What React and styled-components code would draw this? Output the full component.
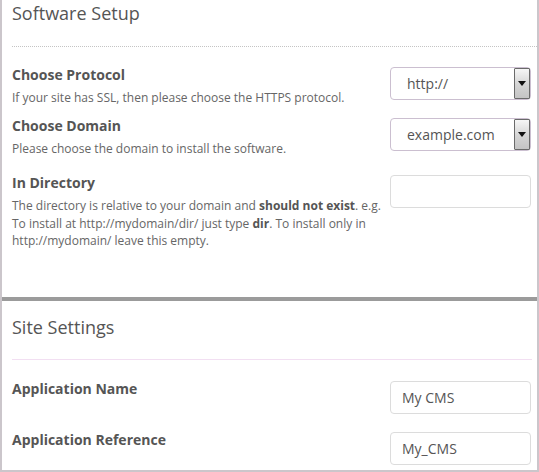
import React from 'react';
import styled, { createGlobalStyle } from 'styled-components';

const Global = createGlobalStyle`
  html, body { margin: 0; padding: 0; background: #fff; }
  body { font-family: "Open Sans", "Liberation Sans", sans-serif; }
  * { box-sizing: border-box; }
`;

const Frame = styled.div`
  width: 539px;
  height: 472px;
  border: 2px solid #cbc6cb;
  border-top: none;
  overflow: hidden;
  background: #fff;
`;

const Section = styled.section`
  padding-left: 10px;
  height: ${p => p.$height}px;
  border-bottom: ${p => (p.$divider ? '4px solid #9b9b9b' : 'none')};
`;

const Heading = styled.h2`
  margin: ${p => p.$top}px 0 0 0;
  font-size: 18px;
  line-height: 24px;
  font-weight: 400;
  color: #555;
`;

const Rule = styled.div`
  margin-top: ${p => p.$top}px;
  margin-right: ${p => p.$right}px;
  border-top: 1px ${p => p.$style} ${p => p.$color};
`;

const Row = styled.div`
  display: flex;
  align-items: flex-start;
  justify-content: space-between;
  padding-right: 6px;
  margin-top: ${p => p.$top}px;
`;

const Info = styled.div`
  flex: 1;
  max-width: 378px;
`;

const Label = styled.div`
  font-size: 14px;
  line-height: 20px;
  font-weight: 700;
  color: #555;
`;

const Desc = styled.div`
  margin-top: 4px;
  font-size: 12px;
  line-height: 17.5px;
  color: #666;
  b { color: #555; font-weight: 700; }
`;

const SelectBox = styled.div`
  width: 141px;
  height: 33px;
  margin-top: 2px;
  display: flex;
  align-items: stretch;
  border: 1px solid #cbbfd0;
  border-radius: 4px;
  background: #fff;
`;

const SelectValue = styled.div`
  flex: 1;
  display: flex;
  align-items: center;
  padding-left: ${p => p.$pad}px;
  font-size: 14px;
  color: #555;
`;

const ArrowButton = styled.div`
  width: 16px;
  margin: 0 0 0 0;
  display: flex;
  align-items: center;
  justify-content: center;
  border: 1px solid #6a6a6a;
  border-radius: 1px;
  background: linear-gradient(#f6f6f6, #d4d4d4 55%, #c4c4c4);
  &::after {
    content: '';
    border-left: 4px solid transparent;
    border-right: 4px solid transparent;
    border-top: 5px solid #111;
  }
`;

const TextBox = styled.div`
  width: 141px;
  height: 33px;
  margin-top: 2px;
  display: flex;
  align-items: center;
  padding-left: 11px;
  border: 1px solid #dcdcdc;
  border-radius: 4px;
  font-size: 14px;
  color: #555;
`;

export default function App() {
  return (
    <>
      <Global />
      <Frame>
        <Section $height={300} $divider>
          <Heading $top={1}>Software Setup</Heading>
          <Rule $top={21} $right={0} $style="dotted" $color="#c4c4c4" />
          <Row $top={18}>
            <Info>
              <Label>Choose Protocol</Label>
              <Desc>If your site has SSL, then please choose the HTTPS protocol.</Desc>
            </Info>
            <SelectBox>
              <SelectValue $pad={16}>http://</SelectValue>
              <ArrowButton />
            </SelectBox>
          </Row>
          <Row $top={9}>
            <Info>
              <Label>Choose Domain</Label>
              <Desc>Please choose the domain to install the software.</Desc>
            </Info>
            <SelectBox>
              <SelectValue $pad={16}>example.com</SelectValue>
              <ArrowButton />
            </SelectBox>
          </Row>
          <Row $top={16}>
            <Info>
              <Label>In Directory</Label>
              <Desc>
                The directory is relative to your domain and <b>should not exist</b>. e.g. To install at
                http://mydomain/dir/ just type <b>dir</b>. To install only in http://mydomain/ leave this empty.
              </Desc>
            </Info>
            <TextBox />
          </Row>
        </Section>
        <Section $height={170}>
          <Heading $top={14}>Site Settings</Heading>
          <Rule $top={20} $right={5} $style="solid" $color="#f2dff2" />
          <Row $top={19}>
            <Info>
              <Label>Application Name</Label>
            </Info>
            <TextBox>My CMS</TextBox>
          </Row>
          <Row $top={16}>
            <Info>
              <Label>Application Reference</Label>
            </Info>
            <TextBox>My_CMS</TextBox>
          </Row>
        </Section>
      </Frame>
    </>
  );
}
